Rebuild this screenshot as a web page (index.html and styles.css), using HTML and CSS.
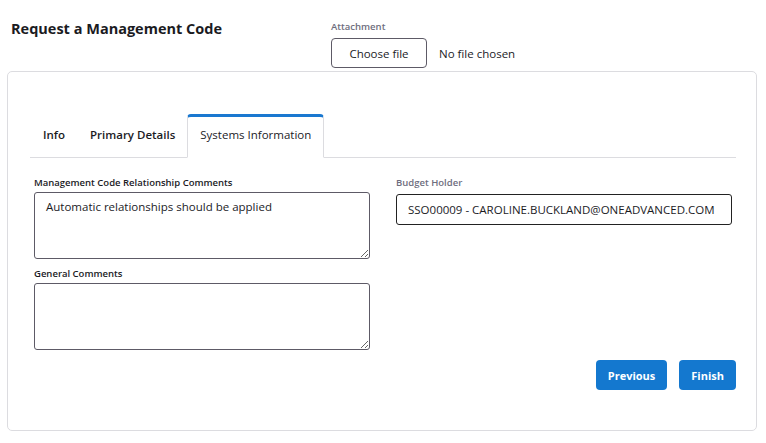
FILE: index.html
```html
<!DOCTYPE html>
<html lang="en">

<head>
    <meta charset="UTF-8">
    <meta name="viewport" content="width=device-width, initial-scale=1.0">
    <title>Request a Management Code</title>
    <link rel="stylesheet" href="styles.css">
</head>

<body>
    <!-- Page header with attachment -->
    <div class="page-header">
        <h1 class="page-title">Request a Management Code</h1>
        <div class="attachment">
            <div class="attachment-label">Attachment</div>
            <div class="file-row">
                <button class="file-button">Choose file</button>
                <span class="file-name">No file chosen</span>
            </div>
        </div>
    </div>

    <div class="card">
        <!-- Tabs -->
        <div class="tab-bar">
            <div class="tab">Info</div>
            <div class="tab">Primary Details</div>
            <div class="tab active">Systems Information</div>
        </div>

        <div class="form-grid">
            <div class="form-col">
                <label class="field-label">Management Code Relationship Comments</label>
                <textarea class="text-area">Automatic relationships should be applied</textarea>
                <label class="field-label second">General Comments</label>
                <textarea class="text-area"></textarea>
            </div>
            <div class="form-col">
                <label class="field-label muted">Budget Holder</label>
                <input type="text" class="text-input" value="SSO00009 - CAROLINE.BUCKLAND@ONEADVANCED.COM">
            </div>
        </div>

        <div class="button-row">
            <button class="primary-button">Previous</button>
            <button class="primary-button">Finish</button>
        </div>
    </div>
</body>

</html>
```

FILE: styles.css
```css
/* Base Styles */
body {
    font-family: 'Open Sans', 'DejaVu Sans', sans-serif;
    margin: 0;
    padding: 0;
    color: #1b1b1f;
    background-color: #fff;
}

.page-header {
    display: flex;
    height: 71px;
    padding-left: 11px;
}

.page-title {
    width: 320px;
    margin: 19px 0 0;
    font-size: 14.5px;
    font-weight: 700;
}

.attachment {
    padding-top: 20px;
}

.attachment-label {
    font-size: 9.5px;
    font-weight: 600;
    color: #6e6e7e;
    margin-bottom: 5px;
}

.file-row {
    display: flex;
    align-items: center;
    gap: 12px;
}

.file-button {
    width: 96px;
    height: 30px;
    background-color: #fff;
    border: 1px solid #5d5a66;
    border-radius: 4px;
    font-family: inherit;
    font-size: 11.5px;
    color: #1b1b1f;
}

.file-name {
    font-size: 11.5px;
}

.card {
    margin: 0 9px 0 7px;
    height: 360px;
    border: 1px solid #dcdce0;
    border-radius: 5px;
    padding: 42px 20px 0 22px;
    box-sizing: border-box;
}

.tab-bar {
    display: flex;
    height: 43px;
    border-bottom: 1px solid #dcdce0;
}

.tab {
    display: flex;
    align-items: center;
    padding: 0 12px 4px 13px;
    font-size: 11.5px;
    font-weight: 600;
    margin-bottom: -1px;
}

.tab.active {
    padding: 0 12px 5px;
    border: 1px solid #dcdce0;
    border-top: 3px solid #1a78d0;
    border-bottom: 1px solid #fff;
    border-radius: 4px 4px 0 0;
    font-weight: 500;
}

.form-grid {
    display: grid;
    grid-template-columns: 336px 336px;
    gap: 26px;
    padding: 18px 4px 0;
}

.form-col {
    display: flex;
    flex-direction: column;
}

.field-label {
    font-size: 9.5px;
    font-weight: 600;
    margin-bottom: 3px;
}

.field-label.second {
    margin-top: 8px;
}

.field-label.muted {
    color: #6e6e7e;
    margin-bottom: 5px;
}

.text-area {
    height: 67px;
    box-sizing: border-box;
    border: 1px solid #5d5a66;
    border-radius: 3px;
    padding: 6px 11px;
    font-family: inherit;
    font-size: 11.5px;
    color: #1b1b1f;
    resize: vertical;
}

.text-input {
    height: 31px;
    box-sizing: border-box;
    border: 1px solid #222;
    border-radius: 3px;
    padding: 0 11px;
    font-family: inherit;
    font-size: 11.5px;
    color: #1b1b1f;
}

.button-row {
    display: flex;
    justify-content: flex-end;
    gap: 12px;
    margin-top: 10px;
}

.primary-button {
    height: 30px;
    padding: 0 12px;
    background-color: #1478cf;
    color: #fff;
    border: none;
    border-radius: 4px;
    font-family: inherit;
    font-size: 11px;
    font-weight: 700;
}
```
